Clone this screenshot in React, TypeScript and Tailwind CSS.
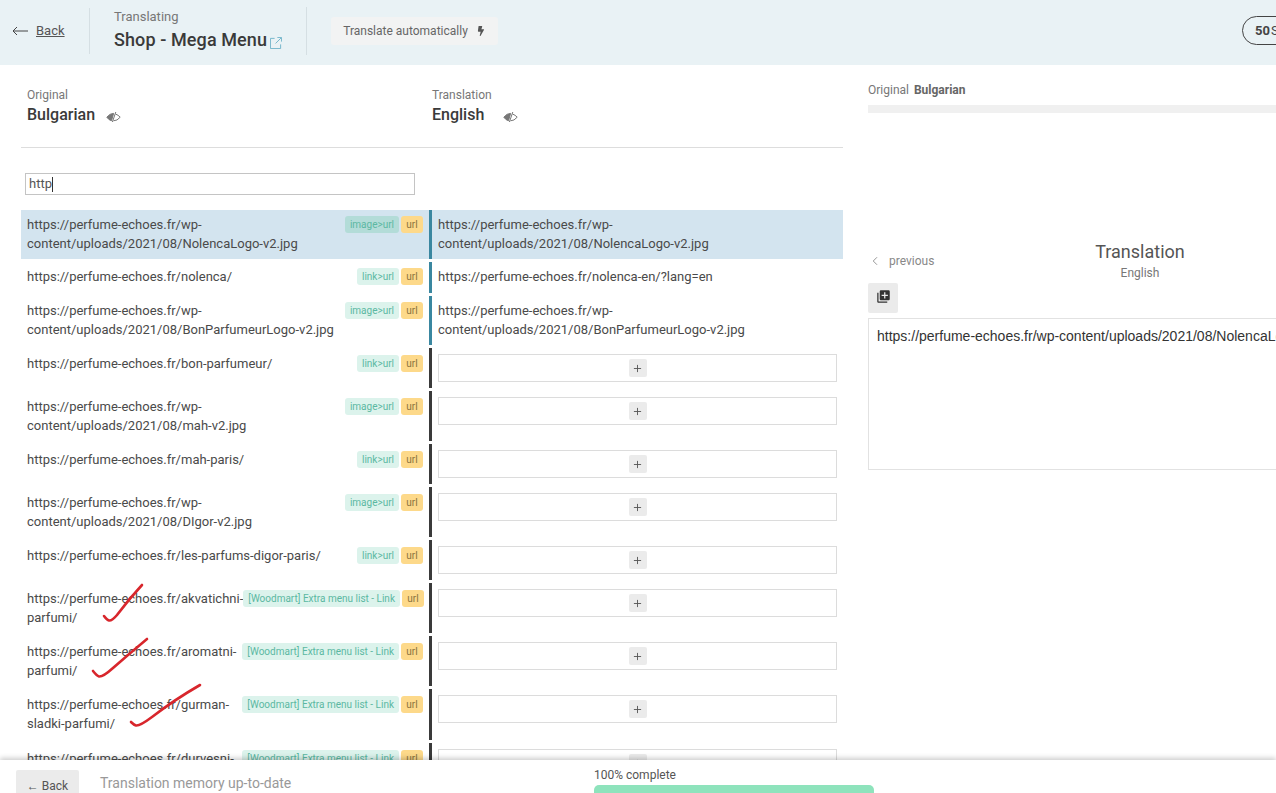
import { FaBolt } from "react-icons/fa";
import { MdLibraryAdd } from "react-icons/md";
import { ChevronLeft, Plus } from "lucide-react";

type Row = {
	source: string[];
	tag: string;
	translation?: string[];
	active?: boolean;
	height: string;
};

const rows: Row[] = [
	{
		source: ["https://perfume-echoes.fr/wp-", "content/uploads/2021/08/NolencaLogo-v2.jpg"],
		tag: "image>url",
		translation: ["https://perfume-echoes.fr/wp-", "content/uploads/2021/08/NolencaLogo-v2.jpg"],
		active: true,
		height: "h-[49px]",
	},
	{
		source: ["https://perfume-echoes.fr/nolenca/"],
		tag: "link>url",
		translation: ["https://perfume-echoes.fr/nolenca-en/?lang=en"],
		height: "h-[31px]",
	},
	{
		source: ["https://perfume-echoes.fr/wp-", "content/uploads/2021/08/BonParfumeurLogo-v2.jpg"],
		tag: "image>url",
		translation: ["https://perfume-echoes.fr/wp-", "content/uploads/2021/08/BonParfumeurLogo-v2.jpg"],
		height: "h-[49px]",
	},
	{ source: ["https://perfume-echoes.fr/bon-parfumeur/"], tag: "link>url", height: "h-10" },
	{
		source: ["https://perfume-echoes.fr/wp-", "content/uploads/2021/08/mah-v2.jpg"],
		tag: "image>url",
		height: "h-[50px]",
	},
	{ source: ["https://perfume-echoes.fr/mah-paris/"], tag: "link>url", height: "h-10" },
	{
		source: ["https://perfume-echoes.fr/wp-", "content/uploads/2021/08/DIgor-v2.jpg"],
		tag: "image>url",
		height: "h-[50px]",
	},
	{ source: ["https://perfume-echoes.fr/les-parfums-digor-paris/"], tag: "link>url", height: "h-10" },
	{
		source: ["https://perfume-echoes.fr/akvatichni-", "parfumi/"],
		tag: "[Woodmart] Extra menu list - Link",
		height: "h-[50px]",
	},
	{
		source: ["https://perfume-echoes.fr/aromatni-", "parfumi/"],
		tag: "[Woodmart] Extra menu list - Link",
		height: "h-[50px]",
	},
	{
		source: ["https://perfume-echoes.fr/gurman-", "sladki-parfumi/"],
		tag: "[Woodmart] Extra menu list - Link",
		height: "h-[51px]",
	},
	{
		source: ["https://perfume-echoes.fr/durvesni-", "parfumi/"],
		tag: "[Woodmart] Extra menu list - Link",
		height: "h-[50px]",
	},
];

const HiddenEye = () => (
	<svg className="mt-[3px] shrink-0" width="15" height="12" viewBox="0 0 15 12" fill="none" stroke="#777" strokeWidth="1">
		<path d="M.8 6.200Q4 2.300 7.600 2.400L5.500 9.700Q3 9.200.8 6.200Z" fill="#777" />
		<path d="M9.500 3Q12.300 4 14.200 6.200 11.200 9.900 7.500 9.800" />
		<path d="M9.800 1 6.400 11" />
	</svg>
);

const StringRow = ({ row }: { row: Row }) => (
	<div className={`flex ${row.height} mb-[3px]`}>
		<div
			className={`w-[408px] shrink-0 flex items-start justify-between pl-1.5 pr-1.5 ${row.translation ? "pt-[5px]" : "pt-1.5"} ${row.active ? "bg-[#d3e4ef]" : ""}`}
		>
			<div className="text-[13px] leading-[19px] text-[#4a4a4a] whitespace-nowrap">
				{row.source.map((line) => (
					<div key={line}>{line}</div>
				))}
			</div>
			<div className="mt-px flex gap-[2px] text-[10px] leading-[17px] shrink-0">
				<span
					className={`rounded-[3px] px-[5px] text-[#5bb8a2] ${row.active ? "bg-[#b3dcd8]" : "bg-[#dcf3ec]"}`}
				>
					{row.tag}
				</span>
				<span className="rounded-[3px] w-[22px] text-center bg-[#fdd98a] text-[#8a7440]">url</span>
			</div>
		</div>
		<div className={`w-[3px] shrink-0 ${row.translation ? "bg-[#3a87a0]" : "bg-[#3a3a3a]"}`} />
		<div className={`w-[411px] shrink-0 ${row.active ? "bg-[#d3e4ef]" : ""}`}>
			{row.translation ? (
				<div className="pl-1.5 pt-[5px] text-[13px] leading-[19px] text-[#4a4a4a] whitespace-nowrap">
					{row.translation.map((line) => (
						<div key={line}>{line}</div>
					))}
				</div>
			) : (
				<div className="ml-1.5 mt-1.5 w-[399px] h-7 border border-[#dcdcdc] flex items-center justify-center">
					<span className="w-[18px] h-[18px] rounded-[2px] bg-[#ebebeb] flex items-center justify-center text-[#555]">
						<Plus size={11} strokeWidth={2} />
					</span>
				</div>
			)}
		</div>
	</div>
);

const App = () => {
	return (
		<div className="relative w-[1276px] h-[793px] overflow-hidden bg-white font-['Roboto',sans-serif] text-[#333]">
			<header className="h-[65px] bg-[#e9f2f5] flex items-center pb-1 relative">
				<a className="ml-3 w-[77px] flex items-center gap-2 text-[13px] text-[#555] shrink-0">
					<svg width="16" height="10" viewBox="0 0 16 10" fill="none" stroke="#444" strokeWidth="1">
						<path d="M16 5H1M5 1 1 5l4 4" />
					</svg>
					<span className="underline">Back</span>
				</a>
				<div className="w-px h-[46px] bg-[#d5dfe3]" />
				<div className="ml-6 mb-[2px] w-[192px] shrink-0">
					<div className="text-[13px] leading-4 text-[#777]">Translating</div>
					<div className="mt-1 flex items-end text-[18px] leading-[22px] font-medium tracking-[0.1px] text-[#3a3a3a]">
						Shop - Mega Menu
						<svg
							className="ml-[3px] mb-[2px]"
							width="12"
							height="12"
							viewBox="0 0 13 13"
							fill="none"
							stroke="#6fb3c9"
							strokeWidth="1"
						>
							<path d="M5 1.500H.5v11h11V8M6 7l6-6M8 .5h4.500V5" />
						</svg>
					</div>
				</div>
				<div className="w-px h-[48px] bg-[#d5dfe3]" />
				<button className="ml-6 w-[167px] h-[28px] rounded-[3px] bg-[#f2f3f3] flex items-center justify-center gap-2 text-xs text-[#666] shrink-0">
					Translate automatically
					<FaBolt size={10} className="text-[#555]" />
				</button>
				<div className="absolute left-[1242px] top-[16px] w-[120px] h-[29px] rounded-full border border-[#444] flex items-center pl-3 text-[13px] whitespace-nowrap text-[#444]">
					<b className="font-bold">50</b>
					<span className="ml-px">Strings</span>
				</div>
			</header>

			<div className="flex">
				<main className="w-[843px] shrink-0 pl-[21px]">
					<div className="h-[83px] border-b border-[#dddddd] flex">
						<div className="w-[411px] pl-1.5 pt-[23px] shrink-0">
							<div className="text-xs leading-[14px] text-[#777]">Original</div>
							<div className="mt-[2px] flex items-center gap-[11px] text-base leading-[22px] font-medium text-[#3a3a3a]">
								Bulgarian
								<HiddenEye />
							</div>
						</div>
						<div className="pt-[23px]">
							<div className="text-xs leading-[14px] text-[#777]">Translation</div>
							<div className="mt-[2px] flex items-center gap-[19px] text-base leading-[22px] font-medium text-[#3a3a3a]">
								English
								<HiddenEye />
							</div>
						</div>
					</div>
					<div className="h-[62px] pl-1 pt-[25px]">
						<div className="w-[390px] h-[22px] border border-[#c4c4c4] px-[3px] flex items-center text-[13px] text-[#555]">
							http
							<span className="w-px h-[15px] bg-[#333]" />
						</div>
					</div>
					<div>
						{rows.map((row) => (
							<StringRow key={row.source.join("")} row={row} />
						))}
					</div>
				</main>

				<aside className="ml-[25px] w-[600px] shrink-0 pt-[17px]">
					<div className="text-xs leading-4 text-[#777]">
						Original <b className="ml-0.5 font-bold text-[#666]">Bulgarian</b>
					</div>
					<div className="mt-[7px] h-2 bg-[#f0f0f0]" />
					<div className="mt-[128px] relative h-[47px] w-[544px] flex flex-col items-center">
						<div className="text-lg leading-[22px] text-[#555]">Translation</div>
						<div className="mt-[2px] text-xs leading-4 text-[#777]">English</div>
						<div className="absolute left-0 top-[12px] flex items-center text-xs text-[#888]">
							<ChevronLeft size={14} strokeWidth={1.5} className="mr-[7px] text-[#888]" />
							previous
						</div>
					</div>
					<div className="mt-[-5px] w-[30px] h-[30px] rounded-[2px] bg-[#ebebeb] flex items-start justify-center pt-[6px]">
						<MdLibraryAdd size={15} className="text-[#333]" />
					</div>
					<div className="mt-[5px] h-[152px] border border-[#e2e2e2] pl-2 pt-[7px] text-sm leading-[20px] text-[#333] whitespace-nowrap overflow-hidden font-['Liberation_Sans',sans-serif]">
						https://perfume-echoes.fr/wp-content/uploads/2021/08/NolencaLogo-v2.jpg
					</div>
				</aside>
			</div>

			{/* pen marks someone drew on the screenshot */}
			<svg className="absolute left-0 top-0 pointer-events-none" width="300" height="793" fill="none" stroke="#d8262c" strokeWidth="2.600" strokeLinecap="round" strokeLinejoin="round">
				<path d="M104 616q3 4 5 4.500 3 .5 8-5.500 12-16 25-30" />
				<path d="M93 671q4 5 6 5.500 4 .5 14-8.500 16-14 34-29" />
				<path d="M131 722q3 3 5 3.500 4 .5 16-8.500 22-17 48-32" />
			</svg>

			<footer className="absolute left-0 right-0 bottom-0 h-[33px] bg-white shadow-[0_-2px_5px_rgba(0,0,0,0.2)] flex">
				<button className="ml-4 mt-[10px] w-[63px] h-[23px] bg-[#ebebeb] text-xs text-[#555] rounded-t-[2px] pt-2">
					← Back
				</button>
				<div className="ml-[21px] mt-[15px] text-sm leading-4 text-[#999] w-[494px] shrink-0">
					Translation memory up-to-date
				</div>
				<div className="w-[280px] shrink-0 mt-[8px]">
					<div className="text-xs leading-[14px] text-[#555]">100% complete</div>
					<div className="mt-[3px] h-[10px] rounded-t-[5px] bg-[#8ee3bc]" />
				</div>
			</footer>
		</div>
	);
};

export default App;
